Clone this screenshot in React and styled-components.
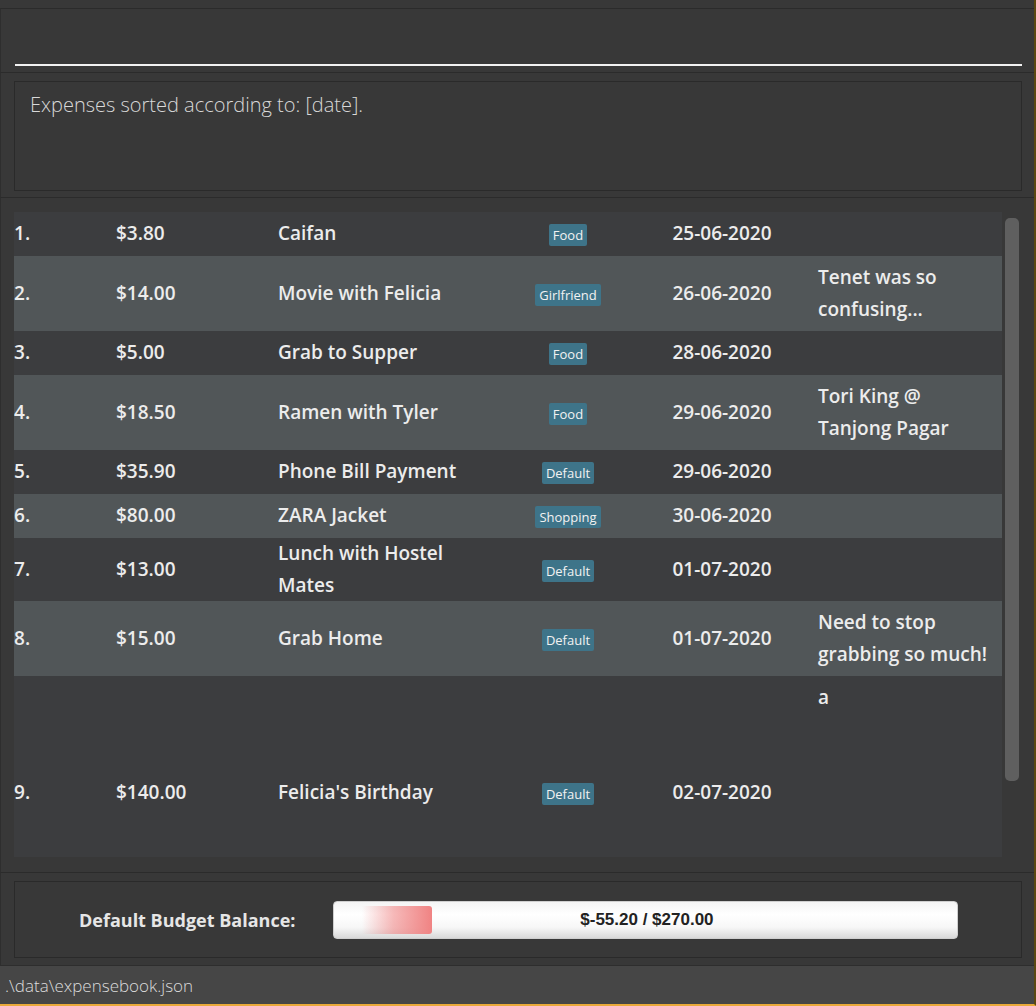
import React from "react";
import styled, { createGlobalStyle } from "styled-components";

const expenses = [
  { amount: "$3.80", desc: "Caifan", tag: "Food", date: "25-06-2020", remark: "" },
  { amount: "$14.00", desc: "Movie with Felicia", tag: "Girlfriend", date: "26-06-2020", remark: "Tenet was so\nconfusing..." },
  { amount: "$5.00", desc: "Grab to Supper", tag: "Food", date: "28-06-2020", remark: "" },
  { amount: "$18.50", desc: "Ramen with Tyler", tag: "Food", date: "29-06-2020", remark: "Tori King @\nTanjong Pagar" },
  { amount: "$35.90", desc: "Phone Bill Payment", tag: "Default", date: "29-06-2020", remark: "" },
  { amount: "$80.00", desc: "ZARA Jacket", tag: "Shopping", date: "30-06-2020", remark: "" },
  { amount: "$13.00", desc: "Lunch with Hostel\nMates", tag: "Default", date: "01-07-2020", remark: "" },
  { amount: "$15.00", desc: "Grab Home", tag: "Default", date: "01-07-2020", remark: "Need to stop\ngrabbing so much!" },
  { amount: "$140.00", desc: "Felicia's Birthday", tag: "Default", date: "02-07-2020", remark: "a", lines: 7 },
];

const GlobalStyle = createGlobalStyle`
  html, body {
    margin: 0;
    padding: 0;
    background: #383838;
  }
  * {
    box-sizing: border-box;
  }
`;

const Window = styled.div`
  width: 1036px;
  height: 1006px;
  background: #383838;
  border-right: 2px solid #5a4812;
  border-bottom: 2px solid #e9a93a;
  padding-top: 8px;
  display: flex;
  flex-direction: column;
  font-family: "Open Sans", "Noto Sans", sans-serif;
  overflow: hidden;
`;

const Section = styled.div`
  height: ${(p) => p.h}px;
  flex: none;
  border-top: 1px solid #2b2b2b;
  border-left: 1px solid #2e2e2e;
  display: flex;
  flex-direction: column;
`;

const CommandField = styled.div`
  flex: 1;
  margin: 0 12px 6px 14px;
  border-bottom: 2px solid #f2f2f2;
`;

const Box = styled.div`
  margin: 8px 12px 0 13px;
  height: ${(p) => p.h}px;
  border: 1px solid #2a2a2a;
  background: #383838;
`;

const ResultText = styled.div`
  padding: 10px 15px;
  font-size: 20px;
  font-weight: 300;
  color: #d9d9d9;
  line-height: 26px;
`;

const ListArea = styled.div`
  margin: 14px 12px 0 13px;
  height: 645px;
  display: flex;
`;

const Viewport = styled.div`
  flex: 1;
  background: #3c3d3f;
  overflow: hidden;
`;

const ScrollTrack = styled.div`
  width: 20px;
  flex: none;
  padding: 6px 3px 0 3px;
`;

const Thumb = styled.div`
  height: 563px;
  width: 14px;
  border-radius: 5px;
  background: #5f5f5f;
`;

const Row = styled.div`
  display: grid;
  grid-template-columns: 102px 162px 212px 156px 152px 1fr;
  align-items: center;
  min-height: 44px;
  background: ${(p) => (p.alt ? "#515658" : "#3c3d3f")};
  color: #ececec;
  font-size: 19px;
  font-weight: 600;
  line-height: 31.5px;
`;

const Cell = styled.div`
  white-space: pre-line;
  text-align: ${(p) => (p.center ? "center" : "left")};
`;

const Remark = styled.div`
  white-space: pre-line;
  padding: 6px 0 6px 20px;
  min-height: ${(p) => (p.lines ? p.lines * 31.5 + 12 : 0)}px;
  align-self: ${(p) => (p.lines ? "start" : "center")};
`;

const Tag = styled.span`
  display: inline-block;
  background: #3e7489;
  color: #f2f2f2;
  font-size: 13px;
  font-weight: 400;
  line-height: 20px;
  padding: 1px 4px;
  border-radius: 2px;
`;

const BudgetBox = styled(Box)`
  display: flex;
  align-items: center;
  padding-left: 64px;
  gap: 38px;
`;

const BudgetLabel = styled.div`
  color: #e6e6e6;
  font-size: 18px;
  font-weight: 700;
`;

const Bar = styled.div`
  position: relative;
  width: 625px;
  height: 38px;
  border-radius: 4px;
  border: 1px solid #cfcfcf;
  background: linear-gradient(to bottom, #f4f4f4 0%, #ffffff 35%, #f7f7f7 70%, #d9d9d9 100%);
  display: flex;
  align-items: center;
  padding-left: 28px;
`;

const Fill = styled.div`
  width: 70px;
  height: 28px;
  border-radius: 0 3px 3px 0;
  background: linear-gradient(to right, rgba(240, 128, 128, 0) 0%, rgba(240, 128, 128, 0.55) 45%, #f08383 100%);
`;

const BarText = styled.div`
  position: absolute;
  inset: 0;
  display: flex;
  align-items: center;
  justify-content: center;
  font-family: "Liberation Sans", Arial, sans-serif;
  font-weight: 700;
  font-size: 17px;
  color: #222;
  padding-left: 2px;
`;

const StatusBar = styled.div`
  height: 39px;
  flex: none;
  background: #464646;
  border-top: 1px solid #2e2e2e;
  display: flex;
  align-items: center;
  padding-left: 5px;
  color: #dcdcdc;
  font-size: 17px;
  font-weight: 300;
`;

export default function App() {
  return (
    <>
      <GlobalStyle />
      <Window>
        <Section h={64}>
          <CommandField />
        </Section>
        <Section h={125}>
          <Box h={110}>
            <ResultText>Expenses sorted according to: [date].</ResultText>
          </Box>
        </Section>
        <Section h={675}>
          <ListArea>
            <Viewport>
              {expenses.map((e, i) => (
                <Row key={i} alt={i % 2 === 1}>
                  <Cell>{i + 1}.</Cell>
                  <Cell>{e.amount}</Cell>
                  <Cell>{e.desc}</Cell>
                  <Cell center>
                    <Tag>{e.tag}</Tag>
                  </Cell>
                  <Cell center>{e.date}</Cell>
                  <Remark lines={e.lines}>{e.remark}</Remark>
                </Row>
              ))}
            </Viewport>
            <ScrollTrack>
              <Thumb />
            </ScrollTrack>
          </ListArea>
        </Section>
        <Section h={93}>
          <BudgetBox h={77}>
            <BudgetLabel>Default Budget Balance:</BudgetLabel>
            <Bar>
              <Fill />
              <BarText>$-55.20 / $270.00</BarText>
            </Bar>
          </BudgetBox>
        </Section>
        <StatusBar>.\data\expensebook.json</StatusBar>
      </Window>
    </>
  );
}
